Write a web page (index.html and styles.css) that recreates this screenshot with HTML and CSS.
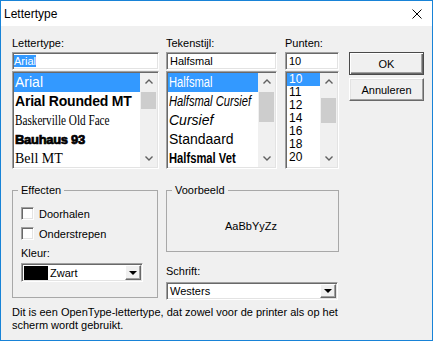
FILE: index.html
```html
<!DOCTYPE html>
<html lang="nl">
<head>
    <meta charset="UTF-8">
    <title>Lettertype</title>
    <link rel="stylesheet" href="styles.css">
</head>
<body>
    <div class="window">
        <div class="titlebar">
            <span>Lettertype</span>
            <svg class="close" width="10" height="10" viewBox="0 0 10 10">
                <path d="M0.5 0.5 L9.5 9.5 M9.5 0.5 L0.5 9.5" stroke="#000" stroke-width="1" fill="none"/>
            </svg>
        </div>

        <div class="client">
            <div class="top">
                <!-- Font family -->
                <div class="col col-font">
                    <div class="label">Lettertype:</div>
                    <div class="textbox sunken"><span class="sel">Arial</span></div>
                    <div class="list sunken">
                        <div class="items">
                            <div class="item sel f-arial">Arial</div>
                            <div class="item f-rounded">Arial Rounded MT</div>
                            <div class="item f-serif"><span class="narrow">Baskerville Old Face</span></div>
                            <div class="item f-bauhaus">Bauhaus 93</div>
                            <div class="item f-bell">Bell MT</div>
                        </div>
                        <div class="vscroll">
                            <div class="sb-btn"><svg width="8" height="5" viewBox="0 0 8 5"><path d="M0.5 4.5 L4 1 L7.5 4.5" stroke="#606060" stroke-width="1.4" fill="none"/></svg></div>
                            <div class="thumb thumb-font"></div>
                            <div class="sb-space"></div>
                            <div class="sb-btn"><svg width="8" height="5" viewBox="0 0 8 5"><path d="M0.5 0.5 L4 4 L7.5 0.5" stroke="#606060" stroke-width="1.4" fill="none"/></svg></div>
                        </div>
                    </div>
                </div>

                <!-- Style -->
                <div class="col col-style">
                    <div class="label">Tekenstijl:</div>
                    <div class="textbox sunken"><span class="plain">Halfsmal</span></div>
                    <div class="list sunken">
                        <div class="items">
                            <div class="item sel"><span class="narrow">Halfsmal</span></div>
                            <div class="item"><span class="narrow italic">Halfsmal Cursief</span></div>
                            <div class="item italic">Cursief</div>
                            <div class="item">Standaard</div>
                            <div class="item"><span class="narrow bold">Halfsmal Vet</span></div>
                        </div>
                        <div class="vscroll">
                            <div class="sb-btn"><svg width="8" height="5" viewBox="0 0 8 5"><path d="M0.5 4.5 L4 1 L7.5 4.5" stroke="#606060" stroke-width="1.4" fill="none"/></svg></div>
                            <div class="thumb thumb-style"></div>
                            <div class="sb-space"></div>
                            <div class="sb-btn"><svg width="8" height="5" viewBox="0 0 8 5"><path d="M0.5 0.5 L4 4 L7.5 0.5" stroke="#606060" stroke-width="1.4" fill="none"/></svg></div>
                        </div>
                    </div>
                </div>

                <!-- Size -->
                <div class="col col-size">
                    <div class="label">Punten:</div>
                    <div class="textbox sunken"><span class="plain">10</span></div>
                    <div class="list sunken">
                        <div class="items">
                            <div class="size sel">10</div>
                            <div class="size">11</div>
                            <div class="size">12</div>
                            <div class="size">14</div>
                            <div class="size">16</div>
                            <div class="size">18</div>
                            <div class="size">20</div>
                        </div>
                        <div class="vscroll">
                            <div class="sb-btn"><svg width="8" height="5" viewBox="0 0 8 5"><path d="M0.5 4.5 L4 1 L7.5 4.5" stroke="#606060" stroke-width="1.4" fill="none"/></svg></div>
                            <div class="thumb thumb-size"></div>
                            <div class="sb-space"></div>
                            <div class="sb-btn"><svg width="8" height="5" viewBox="0 0 8 5"><path d="M0.5 0.5 L4 4 L7.5 0.5" stroke="#606060" stroke-width="1.4" fill="none"/></svg></div>
                        </div>
                    </div>
                </div>

                <div class="buttons">
                    <button class="btn btn-default">OK</button>
                    <button class="btn">Annuleren</button>
                </div>
            </div>

            <div class="bottom">
                <fieldset class="group effects">
                    <legend>Effecten</legend>
                    <div class="check"><span class="box sunken"></span><span>Doorhalen</span></div>
                    <div class="check second"><span class="box sunken"></span><span>Onderstrepen</span></div>
                    <div class="label kleur">Kleur:</div>
                    <div class="combo combo-color sunken">
                        <span class="swatch"></span>
                        <span class="combo-text">Zwart</span>
                        <span class="drop"><span class="tri"></span></span>
                    </div>
                </fieldset>

                <div class="right">
                    <fieldset class="group preview">
                        <legend>Voorbeeld</legend>
                        <div class="sample">AaBbYyZz</div>
                    </fieldset>
                    <div class="label schrift">Schrift:</div>
                    <div class="combo combo-script sunken">
                        <span class="combo-text">Westers</span>
                        <span class="drop"><span class="tri"></span></span>
                    </div>
                </div>
            </div>

            <p class="info">Dit is een OpenType-lettertype, dat zowel voor de printer als op het<br>scherm wordt gebruikt.</p>
        </div>
    </div>
</body>
</html>
```

FILE: styles.css
```css
* {
    margin: 0;
    padding: 0;
    box-sizing: border-box;
}
body {
    background: #fff;
    font-family: "Liberation Sans", Arial, sans-serif;
    font-size: 11px;
    color: #000;
}
.window {
    width: 433px;
    height: 341px;
    border: 1px solid #1883d7;
    background: #f0f0f0;
    display: flex;
    flex-direction: column;
}
.titlebar {
    height: 25px;
    background: #fff;
    display: flex;
    align-items: center;
    justify-content: space-between;
    padding: 0 10px 0 3px;
    font-size: 12px;
}
.client {
    flex: 1;
    padding: 11px 0 0 11px;
}

/* 3D borders */
.sunken {
    border: 1px solid;
    border-color: #a0a0a0 #fff #fff #a0a0a0;
    box-shadow: inset 1px 1px 0 #696969, inset -1px -1px 0 #e3e3e3;
    background: #fff;
    padding: 1px;
}

.top {
    display: flex;
    align-items: flex-start;
}
.col-font { width: 147px; margin-right: 7px; }
.col-style { width: 111px; margin-right: 8px; }
.col-size { width: 54px; margin-right: 10px; }
.label {
    height: 13px;
    line-height: 13px;
}
.textbox {
    margin-top: 2px;
    height: 18px;
    line-height: 14px;
    white-space: nowrap;
    overflow: hidden;
}
.textbox .sel {
    background: #3399ff;
    color: #fff;
}
.textbox .plain {
    padding-left: 2px;
}
.list {
    margin-top: 1px;
    height: 98px;
    display: flex;
}
.items {
    flex: 1;
    overflow: hidden;
}
.item {
    height: 19px;
    line-height: 19px;
    padding-left: 1px;
    font-size: 14px;
    white-space: nowrap;
    overflow: hidden;
}
.sel {
    background: #3399ff;
    color: #fff;
}
.f-rounded { font-weight: bold; font-size: 14px; letter-spacing: -0.2px; }
.f-serif { font-family: "Liberation Serif", serif; font-size: 14px; }
.f-bauhaus { font-weight: bold; font-size: 13px; -webkit-text-stroke: 0.7px #000; letter-spacing: -0.3px; }
.f-bell { font-family: "Liberation Serif", serif; font-size: 14px; }
.italic { font-style: italic; }
.bold { font-weight: bold; }
.narrow {
    display: inline-block;
    transform: scaleX(0.8);
    transform-origin: left center;
}
.size {
    height: 13px;
    line-height: 13px;
    padding-left: 2px;
    font-size: 12px;
}

/* scrollbars */
.vscroll {
    width: 17px;
    background: #f0f0f0;
    display: flex;
    flex-direction: column;
}
.sb-btn {
    height: 17px;
    display: flex;
    align-items: center;
    justify-content: center;
}
.thumb {
    background: #cdcdcd;
    margin: 2px 1px 0;
}
.thumb-font { height: 17px; }
.thumb-style { height: 30px; }
.thumb-size { margin-top: 8px; height: 25px; }
.sb-space { flex: 1; }

/* buttons */
.buttons {
    width: 75px;
    padding-top: 15px;
}
.btn {
    display: block;
    width: 75px;
    height: 23px;
    font-family: "Liberation Sans", Arial, sans-serif;
    font-size: 11px;
    color: #000;
    background: #f0f0f0;
    border: 1px solid;
    border-color: #fff #696969 #696969 #fff;
    box-shadow: inset -1px -1px 0 #a0a0a0, inset 1px 1px 0 #e3e3e3;
}
.btn + .btn {
    margin-top: 3px;
}
.btn-default {
    border-color: #4a4a4a;
    box-shadow: inset 1px 1px 0 #fff, inset -1px -1px 0 #696969, inset -2px -2px 0 #a0a0a0;
}

/* lower part */
.bottom {
    margin-top: 15px;
    height: 114px;
    display: flex;
    align-items: flex-start;
}
.group {
    border: 1px solid #a8a8a8;
    padding: 0 8px 0 5px;
    min-width: 0;
}
.group legend {
    padding: 0 3px;
    line-height: 13px;
}
.effects {
    width: 146px;
    height: 114px;
    padding-top: 10px;
}
.check {
    display: flex;
    align-items: center;
    height: 13px;
    margin-left: 3px;
}
.check.second { margin-top: 7px; }
.box {
    width: 13px;
    height: 13px;
    margin-right: 5px;
}
.kleur {
    margin-top: 7px;
    margin-left: 3px;
}
.combo {
    display: flex;
    align-items: center;
    height: 19px;
    white-space: nowrap;
}
.combo-color {
    margin: 3px 0 0 3px;
    width: 122px;
}
.swatch {
    width: 24px;
    height: 14px;
    background: #000;
    margin-left: 1px;
}
.combo-text {
    margin-left: 2px;
}
.drop {
    margin-left: auto;
    width: 16px;
    height: 15px;
    background: #f0f0f0;
    border: 1px solid;
    border-color: #fff #696969 #696969 #fff;
    box-shadow: inset -1px -1px 0 #a0a0a0;
    display: flex;
    align-items: center;
    justify-content: center;
}
.tri {
    width: 0;
    height: 0;
    border-left: 4px solid transparent;
    border-right: 4px solid transparent;
    border-top: 4px solid #000;
}
.right {
    margin-left: 8px;
    width: 173px;
}
.preview {
    height: 68px;
}
.sample {
    height: 54px;
    padding-top: 4px;
    line-height: 50px;
    text-align: center;
}
.schrift {
    margin-top: 13px;
}
.combo-script {
    margin-top: 4px;
    width: 172px;
    height: 18px;
}
.combo-script .combo-text {
    margin-left: 2px;
}
.combo-script .drop {
    height: 14px;
}
.info {
    margin-top: 8px;
    line-height: 13px;
}
```
